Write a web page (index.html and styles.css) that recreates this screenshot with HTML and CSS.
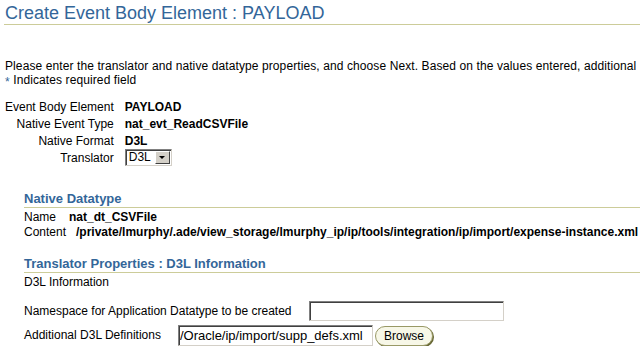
FILE: index.html
```html
<!DOCTYPE html>
<html>
<head>
    <title>Create Event Body Element</title>
    <link rel="stylesheet" href="styles.css">
</head>
<body>

    <h1 class="page-title">Create Event Body Element : PAYLOAD</h1>

    <div class="intro">
        <div>Please enter the translator and native datatype properties, and choose Next. Based on the values entered, additional</div>
        <div><span class="req">*</span> Indicates required field</div>
    </div>

    <div class="props">
        <div class="lbl">Event Body Element</div>
        <div class="val">PAYLOAD</div>
        <div class="lbl">Native Event Type</div>
        <div class="val">nat_evt_ReadCSVFile</div>
        <div class="lbl">Native Format</div>
        <div class="val">D3L</div>
        <div class="lbl">Translator</div>
        <div class="val">
            <span class="select-wrap">
                <select class="select">
                    <option>D3L</option>
                </select>
                <span class="select-btn"><span class="tri"></span></span>
            </span>
        </div>
    </div>

    <div class="section">
        <div class="section-head">Native Datatype</div>
        <div class="row row-name"><span>Name</span><b>nat_dt_CSVFile</b></div>
        <div class="row row-content"><span>Content</span><b>/private/lmurphy/.ade/view_storage/lmurphy_ip/ip/tools/integration/ip/import/expense-instance.xml</b></div>
    </div>

    <div class="section section2">
        <div class="section-head">Translator Properties : D3L Information</div>
        <div class="row">D3L Information</div>
        <div class="field ns">
            <label for="ns">Namespace for Application Datatype to be created</label>
            <input id="ns" class="input" type="text">
        </div>
        <div class="field defs">
            <label for="defs">Additional D3L Definitions</label>
            <input id="defs" class="input" type="text" value="/Oracle/ip/import/supp_defs.xml">
            <button class="browse" type="button">Browse</button>
        </div>
    </div>

</body>
</html>
```

FILE: styles.css
```css
body {
  margin: 0;
  background: #fff;
  color: #000;
  font-family: "Liberation Sans", Arial, sans-serif;
  font-size: 12px;
}

.page-title {
  margin: 3px 0 0 4px;
  padding-left: 1px;
  font-size: 18px;
  font-weight: normal;
  line-height: 21px;
  color: #336699;
  border-bottom: 1px solid #cccc99;
}

.intro {
  margin-top: 34px;
  padding-left: 5px;
  line-height: 14px;
  white-space: nowrap;
  letter-spacing: 0.1px;
}

.req {
  color: #336699;
  position: relative;
  top: 2px;
}

.props {
  display: grid;
  grid-template-columns: max-content max-content;
  column-gap: 11px;
  margin-top: 12px;
  padding-left: 5px;
  line-height: 17px;
}

.lbl {
  text-align: right;
}

.val {
  font-weight: bold;
}

.select-wrap {
  position: relative;
  display: inline-block;
  vertical-align: middle;
  margin-top: -2px;
}

.select {
  appearance: none;
  -webkit-appearance: none;
  box-sizing: border-box;
  width: 47px;
  height: 17px;
  margin: 0;
  padding: 0 0 0 3px;
  border: 1px solid;
  border-color: #808080 #d4d0c8 #d4d0c8 #808080;
  box-shadow: inset 1px 1px 0 #404040;
  border-radius: 0;
  background: #fff;
  font-family: "Liberation Sans", Arial, sans-serif;
  font-size: 12px;
  line-height: 15px;
  color: #000;
}

.select-btn {
  position: absolute;
  top: 2px;
  right: 2px;
  width: 15px;
  height: 13px;
  box-sizing: border-box;
  background: #d4d0c8;
  border: 1px solid;
  border-color: #fff #404040 #404040 #fff;
  pointer-events: none;
}

.tri {
  position: absolute;
  left: 3px;
  top: 4px;
  border-left: 3px solid transparent;
  border-right: 3px solid transparent;
  border-top: 3px solid #000;
}

.section {
  margin: 24px 0 0 24px;
}

.section2 {
  margin-top: 16px;
}

.section-head {
  font-size: 13px;
  font-weight: bold;
  line-height: 16px;
  color: #336699;
  border-bottom: 1px solid #cccc99;
  margin-bottom: 2px;
}

.row {
  line-height: 15px;
  white-space: nowrap;
}

.row-name span {
  margin-right: 13px;
}

.row-content span {
  margin-right: 10px;
}

.field {
  display: flex;
  align-items: center;
  gap: 17px;
  line-height: 15px;
}

.ns {
  margin-top: 11px;
}

.defs {
  margin-top: 4px;
}

.input {
  box-sizing: border-box;
  width: 195px;
  height: 20px;
  margin: 0;
  padding: 0 1px;
  border: 1px solid;
  border-color: #808080 #d4d0c8 #d4d0c8 #808080;
  box-shadow: inset 1px 1px 0 #404040;
  font-family: "Liberation Sans", Arial, sans-serif;
  font-size: 13px;
  color: #000;
  background: #fff;
}

.defs .input {
  height: 21px;
}

.browse {
  margin-left: -15px;
  box-sizing: border-box;
  width: 58px;
  height: 20px;
  padding: 0;
  border: 1px solid #999966;
  border-radius: 10px;
  box-shadow: 1px 1px 0 #666633;
  background: #f7f7e7;
  font-family: "Liberation Sans", Arial, sans-serif;
  font-size: 12px;
  color: #000;
  cursor: pointer;
}
```
